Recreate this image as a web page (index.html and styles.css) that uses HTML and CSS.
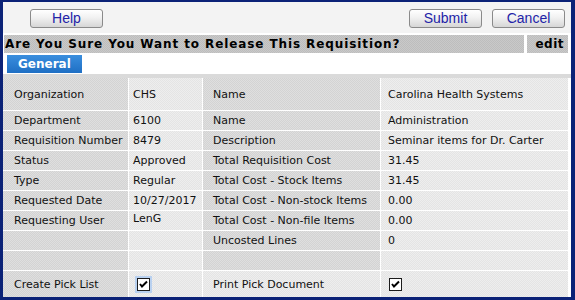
FILE: index.html
```html
<!DOCTYPE html>
<html>
<head>
    <title>Release Requisition</title>
    <link rel="stylesheet" href="styles.css">
</head>
<body>
    <div class="window">
        <div class="toolbar">
            <button class="button">Help</button>
            <div class="actions">
                <button class="button">Submit</button>
                <button class="button">Cancel</button>
            </div>
        </div>

        <div class="titlebar">
            <div class="title">Are You Sure You Want to Release This Requisition?</div>
            <div class="edit">edit</div>
        </div>

        <div class="tabs">
            <div class="tab">General</div>
        </div>
        <div class="tabline"></div>

        <div class="grid">
            <div class="cell label tall">Organization</div>
            <div class="cell value v2 tall">CHS</div>
            <div class="cell label l3 tall">Name</div>
            <div class="cell value v4 tall">Carolina Health Systems</div>

            <div class="cell label">Department</div>
            <div class="cell value v2">6100</div>
            <div class="cell label l3">Name</div>
            <div class="cell value v4">Administration</div>

            <div class="cell label">Requisition Number</div>
            <div class="cell value v2">8479</div>
            <div class="cell label l3">Description</div>
            <div class="cell value v4">Seminar items for Dr. Carter</div>

            <div class="cell label">Status</div>
            <div class="cell value v2">Approved</div>
            <div class="cell label l3">Total Requisition Cost</div>
            <div class="cell value v4">31.45</div>

            <div class="cell label">Type</div>
            <div class="cell value v2">Regular</div>
            <div class="cell label l3">Total Cost - Stock Items</div>
            <div class="cell value v4">31.45</div>

            <div class="cell label">Requested Date</div>
            <div class="cell value v2">10/27/2017</div>
            <div class="cell label l3">Total Cost - Non-stock Items</div>
            <div class="cell value v4">0.00</div>

            <div class="cell label">Requesting User</div>
            <div class="cell value v2 raised">LenG</div>
            <div class="cell label l3">Total Cost - Non-file Items</div>
            <div class="cell value v4">0.00</div>

            <div class="cell label"></div>
            <div class="cell value v2"></div>
            <div class="cell label l3">Uncosted Lines</div>
            <div class="cell value v4">0</div>

            <div class="cell label"></div>
            <div class="cell value v2"></div>
            <div class="cell label l3"></div>
            <div class="cell value v4"></div>

            <div class="cell label last">Create Pick List</div>
            <div class="cell value v2 last">
                <span class="check focus">
                    <svg width="13" height="13" viewBox="0 0 13 13"><rect x="0.5" y="0.5" width="12" height="12" fill="#fff" stroke="#1c1c1c"/><path d="M3 6 L5 8.5 L10 3.5" fill="none" stroke="#000" stroke-width="2"/></svg>
                </span>
            </div>
            <div class="cell value l3 last">Print Pick Document</div>
            <div class="cell value v4 last">
                <span class="check">
                    <svg width="13" height="13" viewBox="0 0 13 13"><rect x="0.5" y="0.5" width="12" height="12" fill="#fff" stroke="#1c1c1c"/><path d="M3 6 L5 8.5 L10 3.5" fill="none" stroke="#000" stroke-width="2"/></svg>
                </span>
            </div>
        </div>
    </div>
</body>
</html>
```

FILE: styles.css
```css
html, body {
    margin: 0;
    padding: 0;
}
body {
    width: 575px;
    height: 300px;
    background-color: #0b2277;
    font-family: "DejaVu Sans", Verdana, sans-serif;
    font-size: 11px;
    color: #111;
    overflow: hidden;
}
.window {
    margin: 2px 4px 0 3px;
    height: 295px;
    background-color: #fff;
}
.toolbar {
    height: 31px;
    display: flex;
    justify-content: space-between;
    align-items: flex-start;
    padding: 0 6px 0 27px;
    background-color: #f3f3f3;
    border-bottom: 2px solid #fff;
}
.actions {
    display: flex;
    gap: 10px;
}
.button {
    margin-top: 7px;
    width: 73px;
    height: 19px;
    padding: 0;
    font-family: "Liberation Sans", Arial, sans-serif;
    font-size: 14px;
    line-height: 17px;
    color: #2323a8;
    background: linear-gradient(#ffffff, #f1f1f1 45%, #d6d6d6);
    border: 1px solid #8a8a8a;
    border-radius: 3px;
    cursor: pointer;
}
.titlebar {
    display: flex;
    gap: 3px;
    height: 18px;
    padding-left: 1px;
    padding-right: 3px;
}
.title, .edit {
    background-color: #c3c3c3;
    background-image: repeating-conic-gradient(#bdbdbd 0 25%, #c9c9c9 0 50%);
    background-size: 2px 2px;
    font-weight: bold;
    font-size: 12px;
    line-height: 18px;
    color: #000;
}
.title {
    flex: 1;
    padding-left: 1px;
    letter-spacing: 0.9px;
}
.edit {
    width: 37px;
    text-align: right;
    padding-right: 4px;
    letter-spacing: 0.5px;
}
.tabs {
    height: 19px;
    padding: 2px 0 0 4px;
}
.tab {
    width: 75px;
    height: 18px;
    box-sizing: border-box;
    padding-left: 11px;
    background: linear-gradient(#3a8ede, #1f6fc4);
    color: #fff;
    font-weight: bold;
    font-size: 12px;
    line-height: 18px;
}
.tabline {
    height: 4px;
    background-color: #dadada;
}
.grid {
    display: grid;
    grid-template-columns: 125px 73px 177px 187px;
    grid-template-rows: 32px repeat(8, 19px) 26px;
    gap: 1px;
    padding-right: 3px;
    background-color: #fff;
}
.cell {
    display: flex;
    align-items: center;
    white-space: nowrap;
    overflow: hidden;
}
.label {
    padding-left: 11px;
    background-color: #d9d9d9;
    background-image: repeating-conic-gradient(#d3d3d3 0 25%, #dfdfdf 0 50%);
    background-size: 2px 2px;
}
.value {
    background-color: #e9e9e9;
    background-image: repeating-conic-gradient(#e4e4e4 0 25%, #eeeeee 0 50%);
    background-size: 2px 2px;
}
.v2 {
    padding-left: 4px;
}
.l3 {
    padding-left: 10px;
}
.v4 {
    padding-left: 7px;
}
.raised {
    align-items: flex-start;
    padding-top: 1px;
}
.check {
    display: inline-flex;
    padding: 2px;
    margin-left: 2px;
}
.v4 .check {
    margin-left: -1px;
}
.focus {
    background-color: #b9d1f0;
}
```
